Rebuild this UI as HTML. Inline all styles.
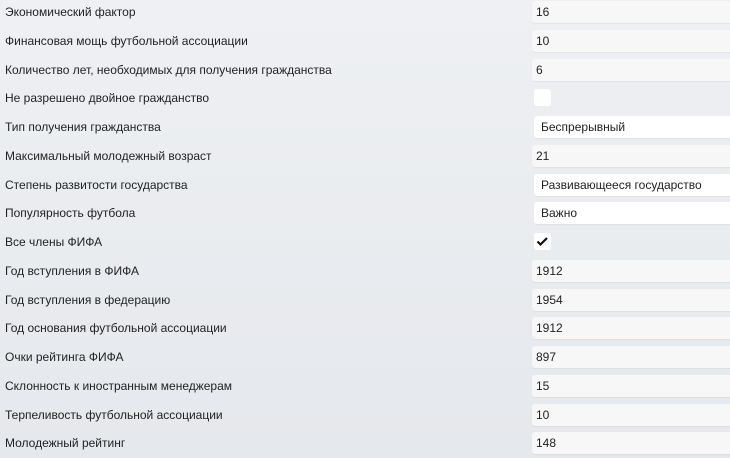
<!DOCTYPE html>
<html><head><meta charset="utf-8"><style>
html,body{margin:0;padding:0}
body{width:730px;height:458px;overflow:hidden;background:linear-gradient(#eef0f3,#e5e8ec);font-family:"Liberation Sans",sans-serif;font-size:12px;color:#222;position:relative}
.r{position:absolute;left:0;width:730px;height:22px}
.l{position:absolute;left:5px;top:4px;line-height:14px}
.b{position:absolute;left:532px;width:210px;height:22px;top:0;background:#f7f7f7;border-radius:3px;box-shadow:0 1px 1px rgba(0,0,0,.05)}
.b span{position:absolute;left:4px;top:4px;line-height:14px}
.s{left:534px;background:#fff}
.s span{left:7px}
.c{position:absolute;left:534px;top:2px;width:17px;height:17px;background:#fff;border-radius:3px}
</style></head><body>
<div class="r" style="top:1px"><div class="l">Экономический фактор</div><div class="b"><span>16</span></div></div>
<div class="r" style="top:30px"><div class="l">Финансовая мощь футбольной ассоциации</div><div class="b"><span>10</span></div></div>
<div class="r" style="top:59px"><div class="l">Количество лет, необходимых для получения гражданства</div><div class="b"><span>6</span></div></div>
<div class="r" style="top:87px"><div class="l">Не разрешено двойное гражданство</div><div class="c"></div></div>
<div class="r" style="top:116px"><div class="l">Тип получения гражданства</div><div class="b s"><span>Беспрерывный</span></div></div>
<div class="r" style="top:145px"><div class="l">Максимальный молодежный возраст</div><div class="b"><span>21</span></div></div>
<div class="r" style="top:174px"><div class="l">Степень развитости государства</div><div class="b s"><span>Развивающееся государство</span></div></div>
<div class="r" style="top:202px"><div class="l">Популярность футбола</div><div class="b s"><span>Важно</span></div></div>
<div class="r" style="top:231px"><div class="l">Все члены ФИФА</div><div class="c"><svg width="17" height="17" viewBox="0 0 17 17"><path d="M3.5 8.5l3 3 6.5-6.5" fill="none" stroke="#111" stroke-width="2.2"/></svg></div></div>
<div class="r" style="top:260px"><div class="l">Год вступления в ФИФА</div><div class="b"><span>1912</span></div></div>
<div class="r" style="top:289px"><div class="l">Год вступления в федерацию</div><div class="b"><span>1954</span></div></div>
<div class="r" style="top:317px"><div class="l">Год основания футбольной ассоциации</div><div class="b"><span>1912</span></div></div>
<div class="r" style="top:346px"><div class="l">Очки рейтинга ФИФА</div><div class="b"><span>897</span></div></div>
<div class="r" style="top:375px"><div class="l">Склонность к иностранным менеджерам</div><div class="b"><span>15</span></div></div>
<div class="r" style="top:404px"><div class="l">Терпеливость футбольной ассоциации</div><div class="b"><span>10</span></div></div>
<div class="r" style="top:432px"><div class="l">Молодежный рейтинг</div><div class="b"><span>148</span></div></div>
</body></html>
